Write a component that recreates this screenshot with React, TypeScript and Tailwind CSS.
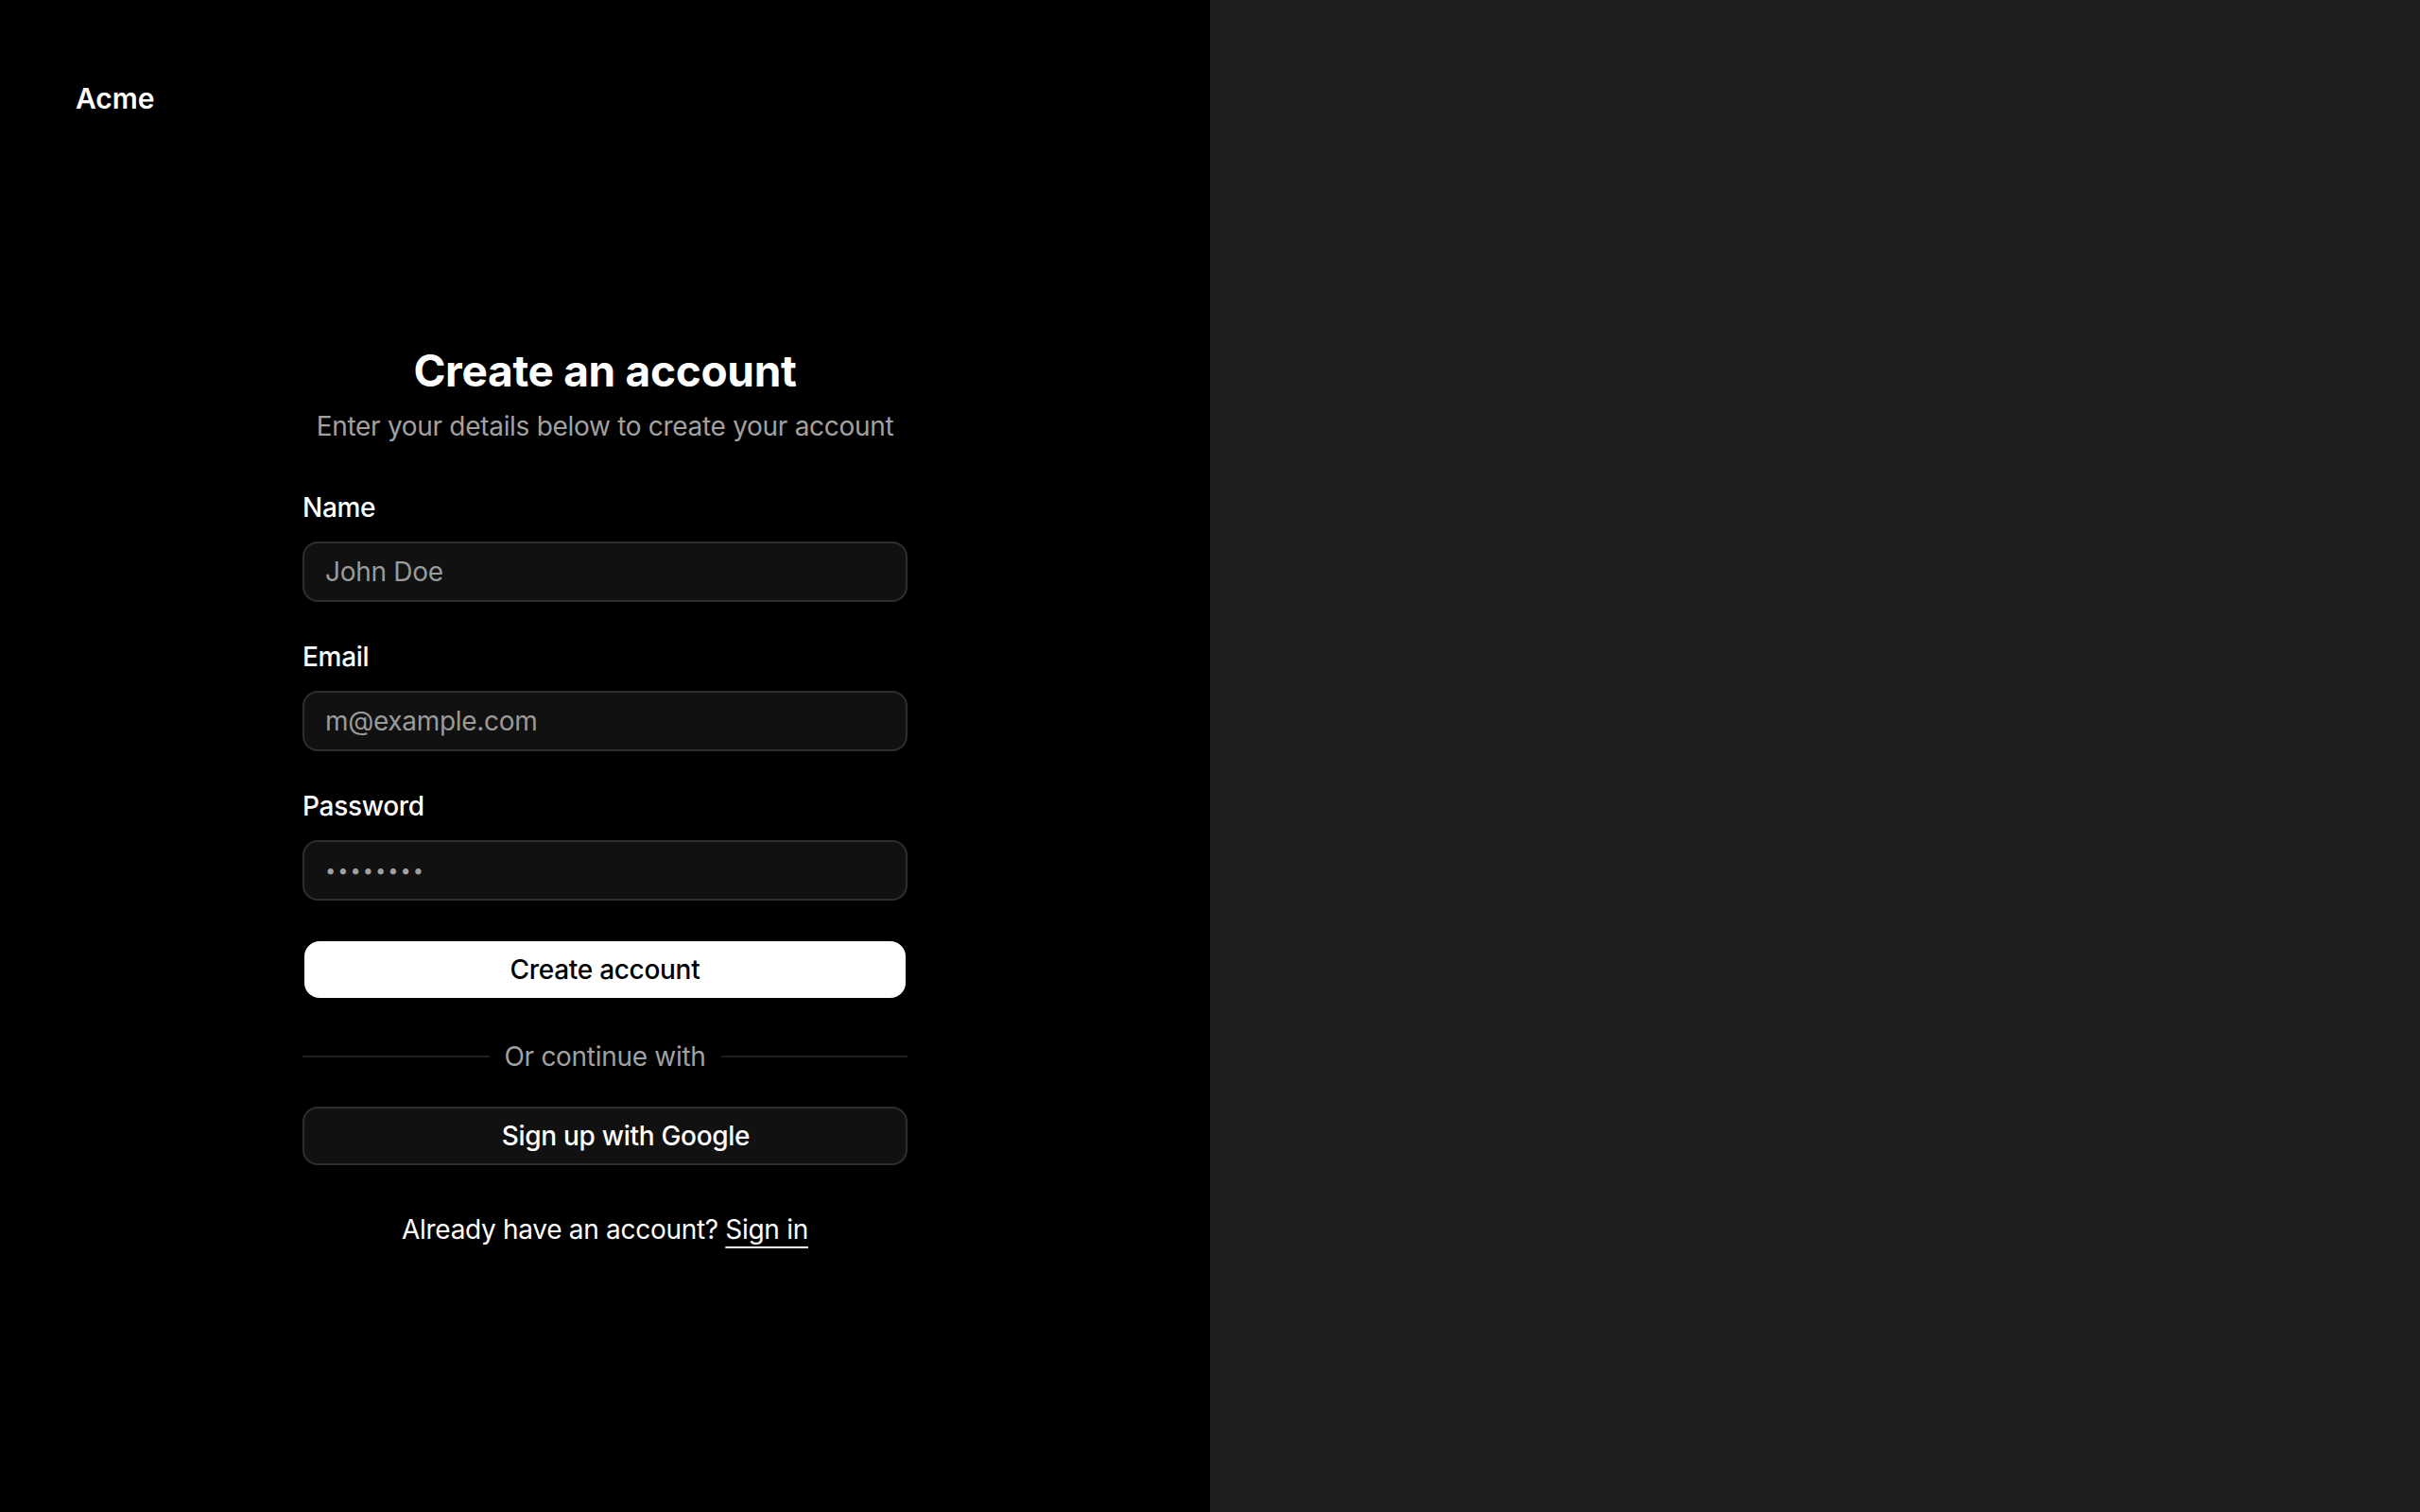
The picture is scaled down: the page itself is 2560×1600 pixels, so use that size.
import React from "react";

export default function App() {
  return (
    <div
      className="flex h-[1600px] w-[2560px] overflow-hidden bg-black text-white antialiased"
      style={{ fontFamily: "Inter, 'Noto Sans', sans-serif" }}
    >
      <div className="flex w-[1280px] flex-col bg-black px-[80px] pt-[84px]">
        <div className="text-[30px] font-semibold leading-[40px] text-white">Acme</div>
        <div className="flex justify-center pt-[240px]">
          <form className="flex w-[640px] flex-col tracking-[-0.3px]" onSubmit={(e) => e.preventDefault()}>
            <div className="flex flex-col items-center text-center">
              <h1 className="text-[46px] font-bold leading-[56px] tracking-[-0.3px] text-white">
                Create an account
              </h1>
              <p className="mt-[11px] text-[28px] leading-[40px] text-[#a1a1a1]">
                Enter your details below to create your account
              </p>
            </div>

            <div className="mt-[52px] flex flex-col gap-[44px]">
              <Field label="Name" placeholder="John Doe" type="text" />
              <Field label="Email" placeholder="m@example.com" type="email" />
              <Field label="Password" type="password" value="••••••••" />
            </div>

            <button
              type="submit"
              className="mx-[2px] mt-[43px] h-[60px] rounded-[16px] bg-white text-[28px] font-medium tracking-[-0.3px] text-black"
            >
              Create account
            </button>

            <div className="mt-[42px] flex items-center gap-[16px]">
              <div className="h-[2px] flex-1 bg-[#1f1f1f]" />
              <span className="text-[28px] leading-[40px] text-[#a1a1a1]">Or continue with</span>
              <div className="h-[2px] flex-1 bg-[#1f1f1f]" />
            </div>

            <button
              type="button"
              className="mt-[33px] flex h-[62px] items-center justify-center gap-[16px] rounded-[16px] border-2 border-[#2e2e2e] bg-[#111111] text-[28px] font-medium tracking-[-0.3px] text-white"
            >
              <span className="inline-block h-[28px] w-[28px]" />
              <span>Sign up with Google</span>
            </button>

            <p className="mt-[48px] text-center text-[28px] leading-[40px] text-white">
              Already have an account?{" "}
              <a href="#" className="underline decoration-2 underline-offset-[8px]">
                Sign in
              </a>
            </p>
          </form>
        </div>
      </div>
      <div className="w-[1280px] bg-[#1e1e1e]" />
    </div>
  );
}

function Field({
  label,
  placeholder,
  type,
  value,
}: {
  label: string;
  placeholder?: string;
  type: string;
  value?: string;
}) {
  return (
    <div className="flex flex-col gap-[22px]" data-type={type}>
      <label className="text-[28px] font-medium leading-[28px] text-white">{label}</label>
      <div className="flex h-[64px] items-center rounded-[16px] border-2 border-[#2e2e2e] bg-[#111111] px-[22px]">
        {value ? (
          <span className="text-[20px] tracking-[2px] text-[#a1a1a1]">{value}</span>
        ) : (
          <span className="text-[28px] text-[#9a9a9a]">{placeholder}</span>
        )}
      </div>
    </div>
  );
}
